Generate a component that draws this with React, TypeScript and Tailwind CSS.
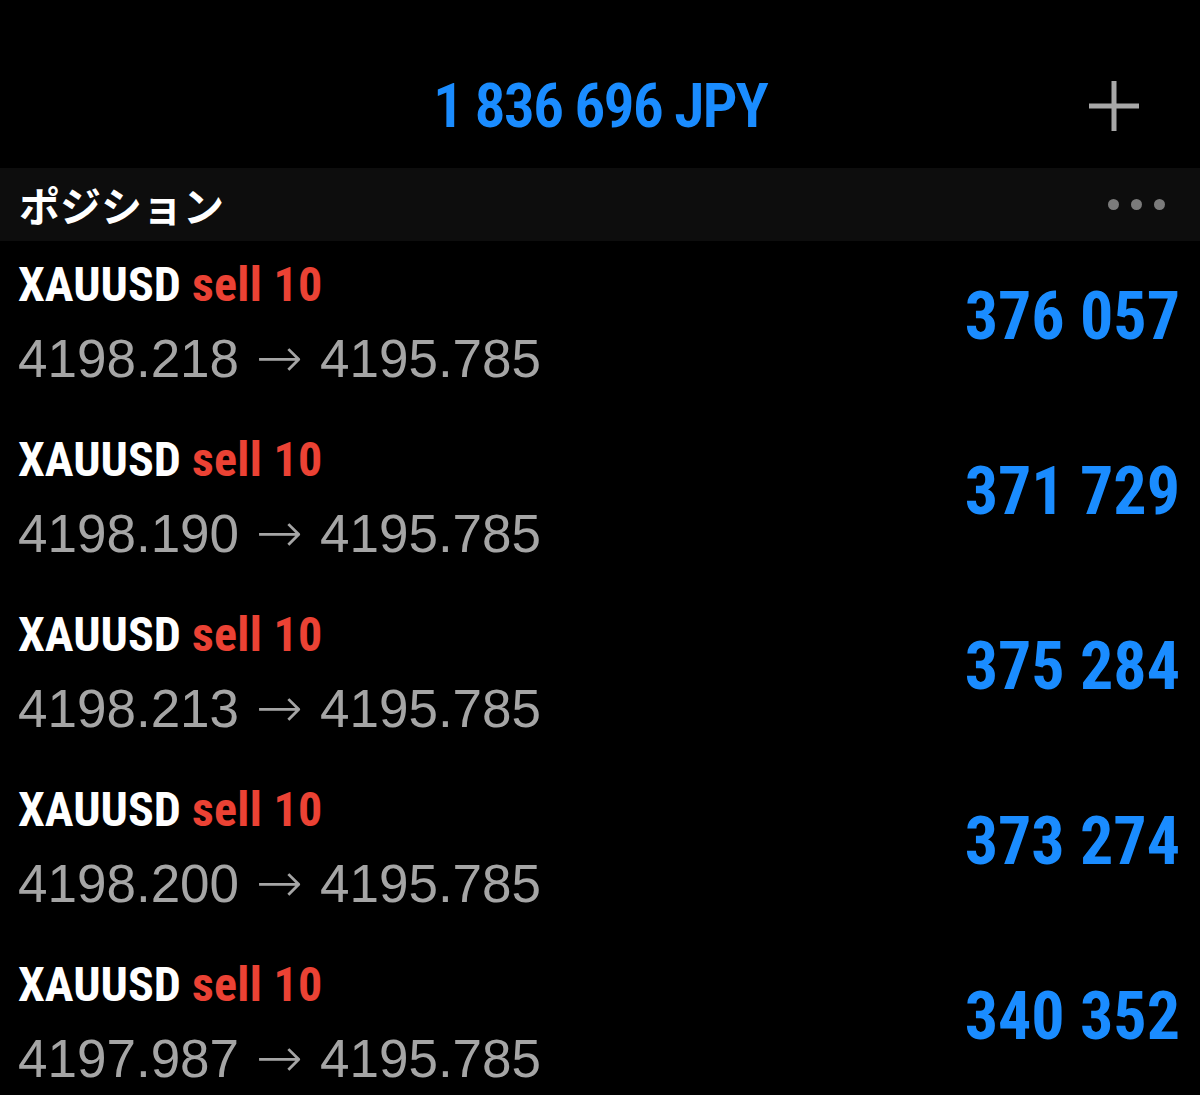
const rows = [
  { open: "4198.218", profit: "376 057" },
  { open: "4198.190", profit: "371 729" },
  { open: "4198.213", profit: "375 284" },
  { open: "4198.200", profit: "373 274" },
  { open: "4197.987", profit: "340 352" },
];

const cond = { fontFamily: '"Roboto Condensed", "Open Sans Condensed", sans-serif' };

export default function App() {
  return (
    <div className="bg-black w-[1200px] h-[1095px] overflow-hidden">
      <header className="h-[168px] grid grid-cols-[1fr_auto_1fr] pt-[75px]">
        <div />
        <div
          className="text-[62px] leading-[62px] font-semibold text-[#1a8cff] tracking-[-2px]"
          style={cond}
        >
          1 836 696 JPY
        </div>
        <div className="flex justify-end items-start pr-[61px] mt-[6px]">
          <svg width="50" height="50" viewBox="0 0 50 50" className="text-[#a8a8a8]">
            <rect x="22.5" y="0" width="5" height="50" fill="currentColor" />
            <rect x="0" y="22.5" width="50" height="5" fill="currentColor" />
          </svg>
        </div>
      </header>

      <div className="h-[73px] bg-[#0d0d0d] flex items-center justify-between pl-[19px] pr-[35px]">
        <span
          className="text-[41px] font-bold text-white leading-none"
          style={{ fontFamily: '"Noto Sans CJK JP", "Noto Sans", sans-serif' }}
        >
          ポジション
        </span>
        <div className="flex gap-[12px]">
          <span className="w-[11px] h-[11px] rounded-full bg-[#7b7b7b]" />
          <span className="w-[11px] h-[11px] rounded-full bg-[#7b7b7b]" />
          <span className="w-[11px] h-[11px] rounded-full bg-[#7b7b7b]" />
        </div>
      </div>

      <div className="flex flex-col">
        {rows.map((r, i) => (
          <div key={i} className="h-[175px] shrink-0 flex justify-between pl-[18px] pr-[20px]">
            <div className="pt-[20px]">
              <div className="text-[48px] leading-[48px] font-bold whitespace-nowrap" style={cond}>
                <span className="text-white">XAUUSD</span>{" "}
                <span className="text-[#eb4234] tracking-[0.3px]">sell 10</span>
              </div>
              <div
                className="mt-[22px] text-[53px] leading-[54px] text-[#a5a5a5] whitespace-nowrap flex items-baseline"
                style={{ fontFamily: '"Liberation Sans", Arial, sans-serif' }}
              >
                <span>{r.open}</span>
                <span
                  className="mx-[17px] text-[56px]"
                  style={{ fontFamily: '"DejaVu Sans ExtraLight", "DejaVu Sans", sans-serif', fontWeight: 200 }}
                >
                  →
                </span>
                <span>4195.785</span>
              </div>
            </div>
            <div
              className="pt-[43px] text-[66px] leading-[66px] font-bold text-[#1a8cff] whitespace-nowrap"
              style={cond}
            >
              {r.profit}
            </div>
          </div>
        ))}
      </div>
    </div>
  );
}
